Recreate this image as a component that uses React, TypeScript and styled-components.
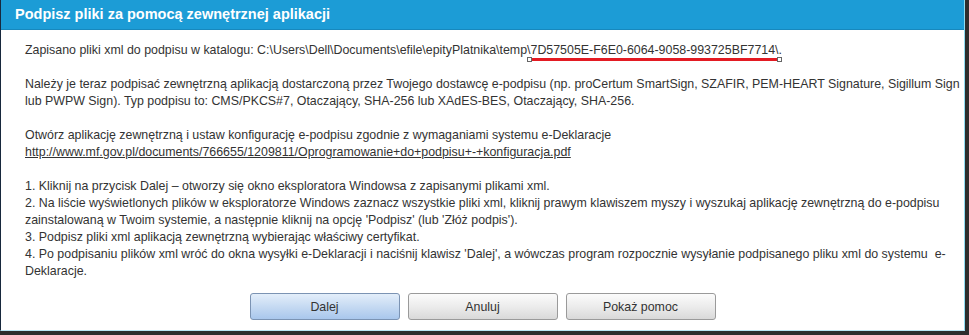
import React from "react";
import styled, { createGlobalStyle } from "styled-components";

const GlobalStyle = createGlobalStyle`
  html, body {
    margin: 0;
    padding: 0;
    background: #2d2d2d;
  }
  body {
    font-family: Arial, "Liberation Sans", sans-serif;
  }
`;

const App = () => {
  return (
    <Page>
      <GlobalStyle />
      <Dialog>
        <TitleBar>Podpisz pliki za pomocą zewnętrznej aplikacji</TitleBar>
        <Body>
          <Para>
            Zapisano pliki xml do podpisu w katalogu:
            C:\Users\Dell\Documents\efile\epityPlatnika\temp\
            <Marked>
              7D57505E-F6E0-6064-9058-993725BF7714\
              <Handle side="left" />
              <Handle side="right" />
            </Marked>
            .
          </Para>
          <Para>
            Należy je teraz podpisać zewnętrzną aplikacją dostarczoną przez
            Twojego dostawcę e-podpisu (np. proCertum SmartSign, SZAFIR,
            PEM-HEART Signature, Sigillum Sign
            <br />
            lub PWPW Sign). Typ podpisu to: CMS/PKCS#7, Otaczający, SHA-256 lub
            XAdES-BES, Otaczający, SHA-256.
          </Para>
          <Para>
            Otwórz aplikację zewnętrzną i ustaw konfigurację e-podpisu zgodnie
            z wymaganiami systemu e-Deklaracje
            <br />
            <Link href="#">
              http://www.mf.gov.pl/documents/766655/1209811/Oprogramowanie+do+podpisu+-+konfiguracja.pdf
            </Link>
          </Para>
          <Para>
            1. Kliknij na przycisk Dalej – otworzy się okno eksploratora
            Windowsa z zapisanymi plikami xml.
            <br />
            2. Na liście wyświetlonych plików w eksploratorze Windows zaznacz
            wszystkie pliki xml, kliknij prawym klawiszem myszy i wyszukaj
            aplikację zewnętrzną do e-podpisu
            <br />
            zainstalowaną w Twoim systemie, a następnie kliknij na opcję
            'Podpisz' (lub 'Złóż podpis').
            <br />
            3. Podpisz pliki xml aplikacją zewnętrzną wybierając właściwy
            certyfikat.
            <br />
            4. Po podpisaniu plików xml wróć do okna wysyłki e-Deklaracji i
            naciśnij klawisz 'Dalej', a wówczas program rozpocznie wysyłanie
            podpisanego pliku xml do systemu&nbsp; e-
            <br />
            Deklaracje.
          </Para>
        </Body>
        <Buttons>
          <Button primary>Dalej</Button>
          <Button>Anuluj</Button>
          <Button>Pokaż pomoc</Button>
        </Buttons>
      </Dialog>
    </Page>
  );
};

export default App;

const Page = styled.div`
  width: 969px;
  height: 335px;
  overflow: hidden;
`;

const Dialog = styled.div`
  width: 963px;
  height: 330px;
  background: #fff;
  border-left: 1px solid #17283d;
  border-right: 1px solid #8fdcf2;
  border-bottom: 1px solid #b9e6f4;
  display: flex;
  flex-direction: column;
  overflow: hidden;
`;

const TitleBar = styled.div`
  height: 29px;
  flex-shrink: 0;
  background: #1c9cd6;
  border-bottom: 1px solid #1788bd;
  color: #fff;
  font-weight: bold;
  font-size: 14.5px;
  line-height: 29px;
  padding-left: 14px;
`;

const Body = styled.div`
  padding: 12px 6px 0 24px;
  color: #333;
  font-size: 12.4px;
  line-height: 17px;
  white-space: nowrap;
`;

const Para = styled.p`
  margin: 0 0 17px 0;
  &:last-child {
    margin-bottom: 0;
  }
`;

const Marked = styled.span`
  position: relative;
  &::after {
    content: "";
    position: absolute;
    left: -2px;
    right: 0;
    bottom: -4px;
    height: 3px;
    background: #e31b23;
  }
`;

const Handle = styled.span<{ side: "left" | "right" }>`
  position: absolute;
  bottom: -5px;
  ${(p) => (p.side === "left" ? "left: -4px;" : "right: -3px;")}
  width: 3px;
  height: 3px;
  background: #fff;
  border: 1px solid #666;
  z-index: 1;
`;

const Link = styled.a`
  color: #333;
  text-decoration: underline;
`;

const Buttons = styled.div`
  display: flex;
  justify-content: center;
  gap: 8px;
  margin-top: auto;
  padding-bottom: 10px;
`;

const Button = styled.button<{ primary?: boolean }>`
  width: 150px;
  height: 27px;
  border-radius: 3px;
  font-family: Arial, "Liberation Sans", sans-serif;
  font-size: 12.4px;
  color: #333;
  cursor: pointer;
  border: 1px solid ${(p) => (p.primary ? "#7b93b3" : "#9a9a9a")};
  background: ${(p) =>
    p.primary
      ? "linear-gradient(to bottom, #e3eefa 0%, #c6daf2 50%, #a9c7ec 100%)"
      : "linear-gradient(to bottom, #fbfbfb 0%, #ececec 50%, #d9d9d9 100%)"};
`;
